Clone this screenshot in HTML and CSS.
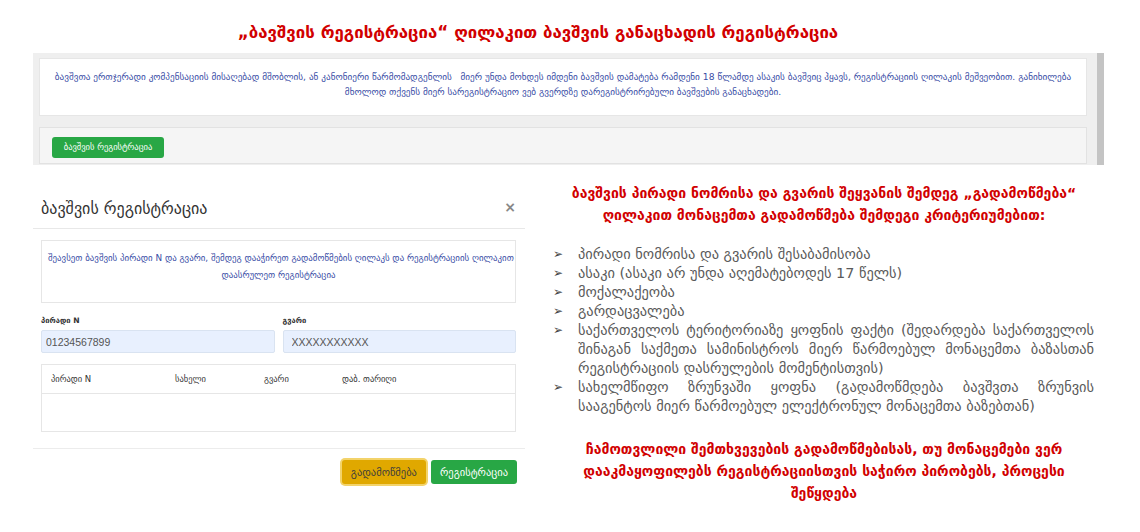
FILE: index.html
```html
<!DOCTYPE html>
<html lang="ka">
<head>
    <meta charset="UTF-8">
    <meta name="viewport" content="width=device-width, initial-scale=1.0">
    <title>ბავშვის რეგისტრაცია</title>
    <link rel="stylesheet" href="styles.css">
</head>
<body>
    <h1 class="page-title">„ბავშვის რეგისტრაცია“ ღილაკით ბავშვის განაცხადის რეგისტრაცია</h1>

    <div class="panel">
        <div class="panel-body">
            <div class="notice">
                ბავშვთა ერთჯერადი კომპენსაციის მისაღებად მშობლის, ან კანონიერი წარმომადგენლის &nbsp; მიერ უნდა მოხდეს იმდენი ბავშვის დამატება რამდენი 18 წლამდე ასაკის ბავშვიც ჰყავს, რეგისტრაციის ღილაკის მეშვეობით. განიხილება<br>
                მხოლოდ თქვენს მიერ სარეგისტრაციო ვებ გვერდზე დარეგისტრირებული ბავშვების განაცხადები.
            </div>
            <div class="toolbar">
                <button class="btn btn-green btn-small">ბავშვის რეგისტრაცია</button>
            </div>
        </div>
        <div class="scrollbar"></div>
    </div>

    <div class="lower">
        <div class="modal">
            <div class="modal-header">
                <span class="modal-title">ბავშვის რეგისტრაცია</span>
                <span class="close">×</span>
            </div>
            <div class="modal-body">
                <div class="hint">
                    შეავსეთ ბავშვის პირადი N და გვარი, შემდეგ დააჭირეთ გადამოწმების ღილაკს და რეგისტრაციის ღილაკით<br>
                    დაასრულეთ რეგისტრაცია
                </div>
                <div class="fields">
                    <div class="field">
                        <label for="pid">პირადი N</label>
                        <input type="text" id="pid" value="01234567899">
                    </div>
                    <div class="field">
                        <label for="surname">გვარი</label>
                        <input type="text" id="surname" class="indent" value="XXXXXXXXXXX">
                    </div>
                </div>
                <div class="results">
                    <div class="results-head">
                        <span>პირადი N</span>
                        <span>სახელი</span>
                        <span>გვარი</span>
                        <span>დაბ. თარიღი</span>
                    </div>
                    <div class="results-body"></div>
                </div>
            </div>
            <div class="modal-footer">
                <button class="btn btn-yellow">გადამოწმება</button>
                <button class="btn btn-green">რეგისტრაცია</button>
            </div>
        </div>

        <div class="notes">
            <h2>ბავშვის პირადი ნომრისა და გვარის შეყვანის შემდეგ „გადამოწმება“ ღილაკით მონაცემთა გადამოწმება შემდეგი კრიტერიუმებით:</h2>
            <ul class="criteria">
                <li>პირადი ნომრისა და გვარის შესაბამისობა</li>
                <li>ასაკი (ასაკი არ უნდა აღემატებოდეს 17 წელს)</li>
                <li>მოქალაქეობა</li>
                <li>გარდაცვალება</li>
                <li>საქართველოს ტერიტორიაზე ყოფნის ფაქტი (შედარდება საქართველოს შინაგან საქმეთა სამინისტროს მიერ წარმოებულ მონაცემთა ბაზასთან რეგისტრაციის დასრულების მომენტისთვის)</li>
                <li>სახელმწიფო ზრუნვაში ყოფნა (გადამოწმდება ბავშვთა ზრუნვის სააგენტოს მიერ წარმოებულ ელექტრონულ მონაცემთა ბაზებთან)</li>
            </ul>
            <p class="warning">ჩამოთვლილი შემთხვევების გადამოწმებისას, თუ მონაცემები ვერ დააკმაყოფილებს რეგისტრაციისთვის საჭირო პირობებს, პროცესი შეწყდება</p>
        </div>
    </div>
</body>
</html>
```

FILE: styles.css
```css
body {
    margin: 0;
    font-family: "DejaVu Sans", "Liberation Sans", sans-serif;
    background-color: #fff;
}

.page-title {
    margin: 0;
    padding: 21px 64px 0 0;
    height: 22px;
    line-height: 22px;
    text-align: center;
    font-size: 16.8px;
    font-weight: bold;
    color: #d10000;
}

/* top page panel */
.panel {
    margin: 10px 0 0 33px;
    width: 1071px;
    height: 112px;
    background-color: #efefef;
    display: flex;
}

.panel-body {
    flex: 1;
    padding: 5px 10px 0 6px;
}

.notice {
    height: 46px;
    padding-top: 10px;
    background-color: #fff;
    border: 1px solid #e6e6e6;
    text-align: center;
    font-size: 9.2px;
    line-height: 15px;
    color: #3a4ea6;
    white-space: nowrap;
}

.toolbar {
    margin-top: 11px;
    height: 21px;
    padding: 7px 12px;
    background-color: #f5f5f5;
    border: 1px solid #e2e2e2;
}

.scrollbar {
    width: 7px;
    background-color: #c4c4c4;
}

.btn {
    border: none;
    border-radius: 3px;
    font-family: "DejaVu Sans", sans-serif;
    font-size: 10.5px;
    height: 24px;
    padding: 0 9px;
}

.btn-small {
    height: 21px;
    width: 112px;
    font-size: 8.5px;
    padding: 0;
}

.btn-green {
    background-color: #28a745;
    color: #fff;
}

.btn-yellow {
    background-color: #e0a800;
    color: #3d3d3d;
    box-shadow: 0 0 0 2px #f3d36a;
}

/* modal */
.lower {
    display: flex;
    gap: 25px;
    margin: 17px 0 0 33px;
}

.modal {
    width: 492px;
    padding-top: 3px;
}

.modal-header {
    height: 43px;
    border-bottom: 1px solid #e8e8e8;
    display: flex;
    justify-content: space-between;
    align-items: center;
    padding: 0 9px 0 8px;
}

.modal-title {
    font-size: 16px;
    color: #333;
    padding-top: 4px;
}

.close {
    font-size: 14px;
    font-weight: bold;
    color: #888;
}

.modal-body {
    padding: 11px 9px 0 8px;
}

.hint {
    height: 52px;
    padding: 9px 6px 0;
    border: 1px solid #e6e6e6;
    text-align: center;
    font-size: 8.9px;
    line-height: 17px;
    color: #3a4ea6;
    white-space: nowrap;
}

.fields {
    display: flex;
    gap: 8px;
    margin-top: 12px;
}

.field {
    flex: 1;
    display: flex;
    flex-direction: column;
}

.field label {
    font-size: 7.6px;
    font-weight: bold;
    color: #333;
    line-height: 12px;
    margin-bottom: 3px;
}

.field input {
    height: 23px;
    box-sizing: border-box;
    border: 1px solid #d9e3f1;
    border-radius: 2px;
    background-color: #e8f0fe;
    font-family: "Liberation Sans", sans-serif;
    font-size: 10.5px;
    color: #555;
    padding: 0 4px;
}

.field input.indent {
    padding-left: 8px;
}

.results {
    margin-top: 11px;
    border: 1px solid #e6e6e6;
}

.results-head {
    height: 28px;
    display: grid;
    grid-template-columns: 124px 89px 78px 1fr;
    align-items: center;
    padding-left: 9px;
    border-bottom: 1px solid #e6e6e6;
    font-size: 8.5px;
    color: #333;
}

.results-body {
    height: 37px;
}

.modal-footer {
    margin-top: 16px;
    border-top: 1px solid #ececec;
    padding: 11px 8px 0 0;
    display: flex;
    justify-content: flex-end;
    gap: 5px;
}

/* notes on the right */
.notes {
    width: 548px;
}

.notes h2 {
    margin: 0;
    text-align: center;
    font-size: 14px;
    line-height: 22px;
    color: #d10000;
}

.criteria {
    list-style: none;
    margin: 19px 0 0;
    padding: 0 4px 0 3px;
}

.criteria li {
    display: flex;
    font-size: 14.4px;
    line-height: 19px;
    color: #5a5a5a;
    text-align: justify;
}

.criteria li::before {
    content: "➢";
    flex: 0 0 25px;
    font-size: 12px;
    color: #444;
}

.warning {
    margin: 22px 0 0;
    padding: 0 20px;
    text-align: center;
    font-size: 14px;
    font-weight: bold;
    line-height: 22px;
    color: #d10000;
}
```
